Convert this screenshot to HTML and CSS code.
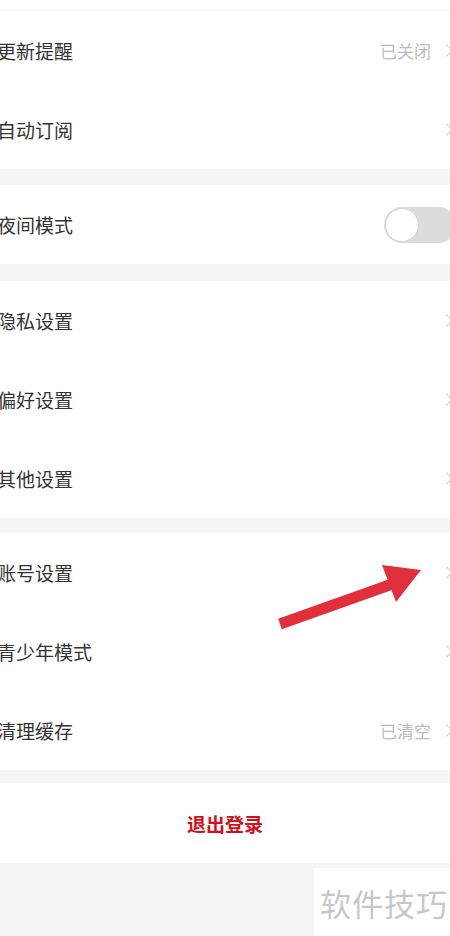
FILE: index.html
```html
<!DOCTYPE html>
<html lang="zh-CN">
<head>
    <meta charset="UTF-8">
    <meta name="viewport" content="width=device-width, initial-scale=1.0">
    <title>设置</title>
    <link rel="stylesheet" href="styles.css">
</head>
<body>
    <div class="settings">
        <div class="top-strip"></div>

        <div class="group">
            <div class="row">
                <span class="label">更新提醒</span>
                <span class="value">已关闭</span>
                <span class="chevron"></span>
            </div>
            <div class="row">
                <span class="label">自动订阅</span>
                <span class="chevron"></span>
            </div>
        </div>

        <div class="group gap-16">
            <div class="row">
                <span class="label">夜间模式</span>
                <span class="switch"><span class="knob"></span></span>
            </div>
        </div>

        <div class="group gap-17">
            <div class="row">
                <span class="label">隐私设置</span>
                <span class="chevron"></span>
            </div>
            <div class="row">
                <span class="label">偏好设置</span>
                <span class="chevron"></span>
            </div>
            <div class="row">
                <span class="label">其他设置</span>
                <span class="chevron"></span>
            </div>
        </div>

        <div class="group gap-15">
            <div class="row">
                <span class="label">账号设置</span>
                <span class="chevron"></span>
            </div>
            <div class="row">
                <span class="label">青少年模式</span>
                <span class="chevron"></span>
            </div>
            <div class="row">
                <span class="label">清理缓存</span>
                <span class="value">已清空</span>
                <span class="chevron"></span>
            </div>
        </div>

        <div class="group gap-13">
            <div class="logout">退出登录</div>
        </div>
    </div>

    <!-- annotation arrow drawn over the screenshot -->
    <svg class="arrow" width="170" height="80" viewBox="0 0 170 80">
        <line x1="10" y1="70" x2="128" y2="28" stroke="#e0303c" stroke-width="11"/>
        <polygon points="112,11 151,16 126,48" fill="#e0303c"/>
    </svg>

    <div class="watermark">软件技巧</div>
</body>
</html>
```

FILE: styles.css
```css
* {
    margin: 0;
    padding: 0;
    box-sizing: border-box;
}

html, body {
    height: 100%;
}

body {
    font-family: "Noto Sans CJK SC", "Noto Sans", sans-serif;
    background: #f5f5f7;
    overflow: hidden;
    position: relative;
}

.settings {
    width: 470px;
    margin-left: -3px;
}

.top-strip {
    height: 11px;
    background: #fff;
    border-bottom: 1px solid #f4f4f4;
}

.group {
    background: #fff;
}

.gap-13 { margin-top: 13px; }
.gap-15 { margin-top: 15px; }
.gap-16 { margin-top: 16px; }
.gap-17 { margin-top: 17px; }

.row {
    height: 79px;
    display: flex;
    align-items: center;
    padding-right: 13px;
}

.label {
    flex: 1;
    font-size: 19px;
    color: #333;
}

.value {
    font-size: 17px;
    color: #bcbcbc;
    margin-right: 11px;
}

.chevron {
    width: 9px;
    height: 9px;
    border-top: 1.5px solid #c4c4c4;
    border-right: 1.5px solid #c4c4c4;
    transform: rotate(45deg);
    margin-right: 3px;
}

.switch {
    width: 72px;
    height: 36px;
    border-radius: 18px;
    background: #dcdcdc;
    display: flex;
    align-items: center;
    padding-left: 1px;
    margin-right: -2px;
}

.knob {
    width: 34px;
    height: 34px;
    border-radius: 50%;
    background: #fff;
    border: 1.5px solid #d2d2d2;
}

.logout {
    height: 80px;
    display: flex;
    align-items: center;
    justify-content: center;
    font-size: 19px;
    font-weight: bold;
    color: #d0111b;
    padding-right: 14px;
}

.arrow {
    position: absolute;
    left: 270px;
    top: 554px;
}

.watermark {
    position: absolute;
    left: 314px;
    top: 868px;
    width: 140px;
    height: 68px;
    background: #fff;
    color: #c8c8c8;
    font-size: 31px;
    padding: 12px 0 0 6px;
    letter-spacing: 1px;
}
```
